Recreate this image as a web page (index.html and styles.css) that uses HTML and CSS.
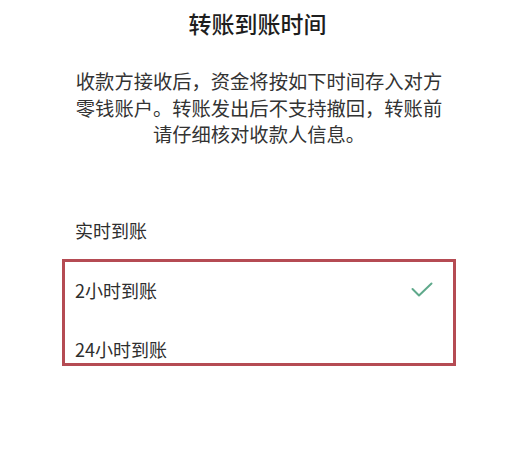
FILE: index.html
```html
<!DOCTYPE html>
<html lang="zh">
<head>
<meta charset="utf-8">
<link rel="stylesheet" href="styles.css">
</head>
<body>
<div class="sheet">
  <h1 class="title">转账到账时间</h1>
  <p class="desc">收款方接收后，资金将按如下时间存入对方<br>零钱账户。转账发出后不支持撤回，转账前<br>请仔细核对收款人信息。</p>
  <div class="options">
    <div class="opt opt-first">实时到账</div>
    <div class="highlight">
      <div class="opt opt-sel">
        <span>2小时到账</span>
        <svg class="check" width="22" height="16" viewBox="0 0 22 16"><polyline points="1.5,7 8,13.5 20.5,1.5" fill="none" stroke="#5fa98b" stroke-width="2" stroke-linecap="round" stroke-linejoin="round"/></svg>
      </div>
      <div class="opt opt-last">24小时到账</div>
    </div>
  </div>
</div>
</body>
</html>
```
FILE: styles.css
```css
html, body {
  margin: 0;
  padding: 0;
  background: #ffffff;
}
body {
  font-family: "Noto Sans CJK SC", "Noto Sans", sans-serif;
  color: #2a2a2a;
  width: 515px;
  height: 470px;
  overflow: hidden;
}
.sheet {
  display: flex;
  flex-direction: column;
}
.title {
  margin: 0;
  padding-top: 7px;
  font-size: 23px;
  line-height: 32px;
  font-weight: 500;
  text-align: center;
  color: #1e1e1e;
}
.desc {
  margin: 29px 0 0;
  font-size: 19.3px;
  line-height: 26.5px;
  text-align: center;
  color: #333333;
  padding-left: 3px;
}
.options {
  margin-top: 70px;
  display: flex;
  flex-direction: column;
}
.opt {
  font-size: 18px;
  line-height: 24px;
  color: #2e2e2e;
}
.opt-first {
  padding-left: 75px;
  padding-bottom: 17px;
}
.highlight {
  margin-left: 62px;
  width: 388px;
  border: 3px solid #b54b53;
}
.opt-sel {
  display: flex;
  align-items: center;
  justify-content: space-between;
  padding: 16px 20px 35px 10px;
}
.check {
  display: block;
}
.opt-last {
  padding: 0 10px 2px;
}
```
